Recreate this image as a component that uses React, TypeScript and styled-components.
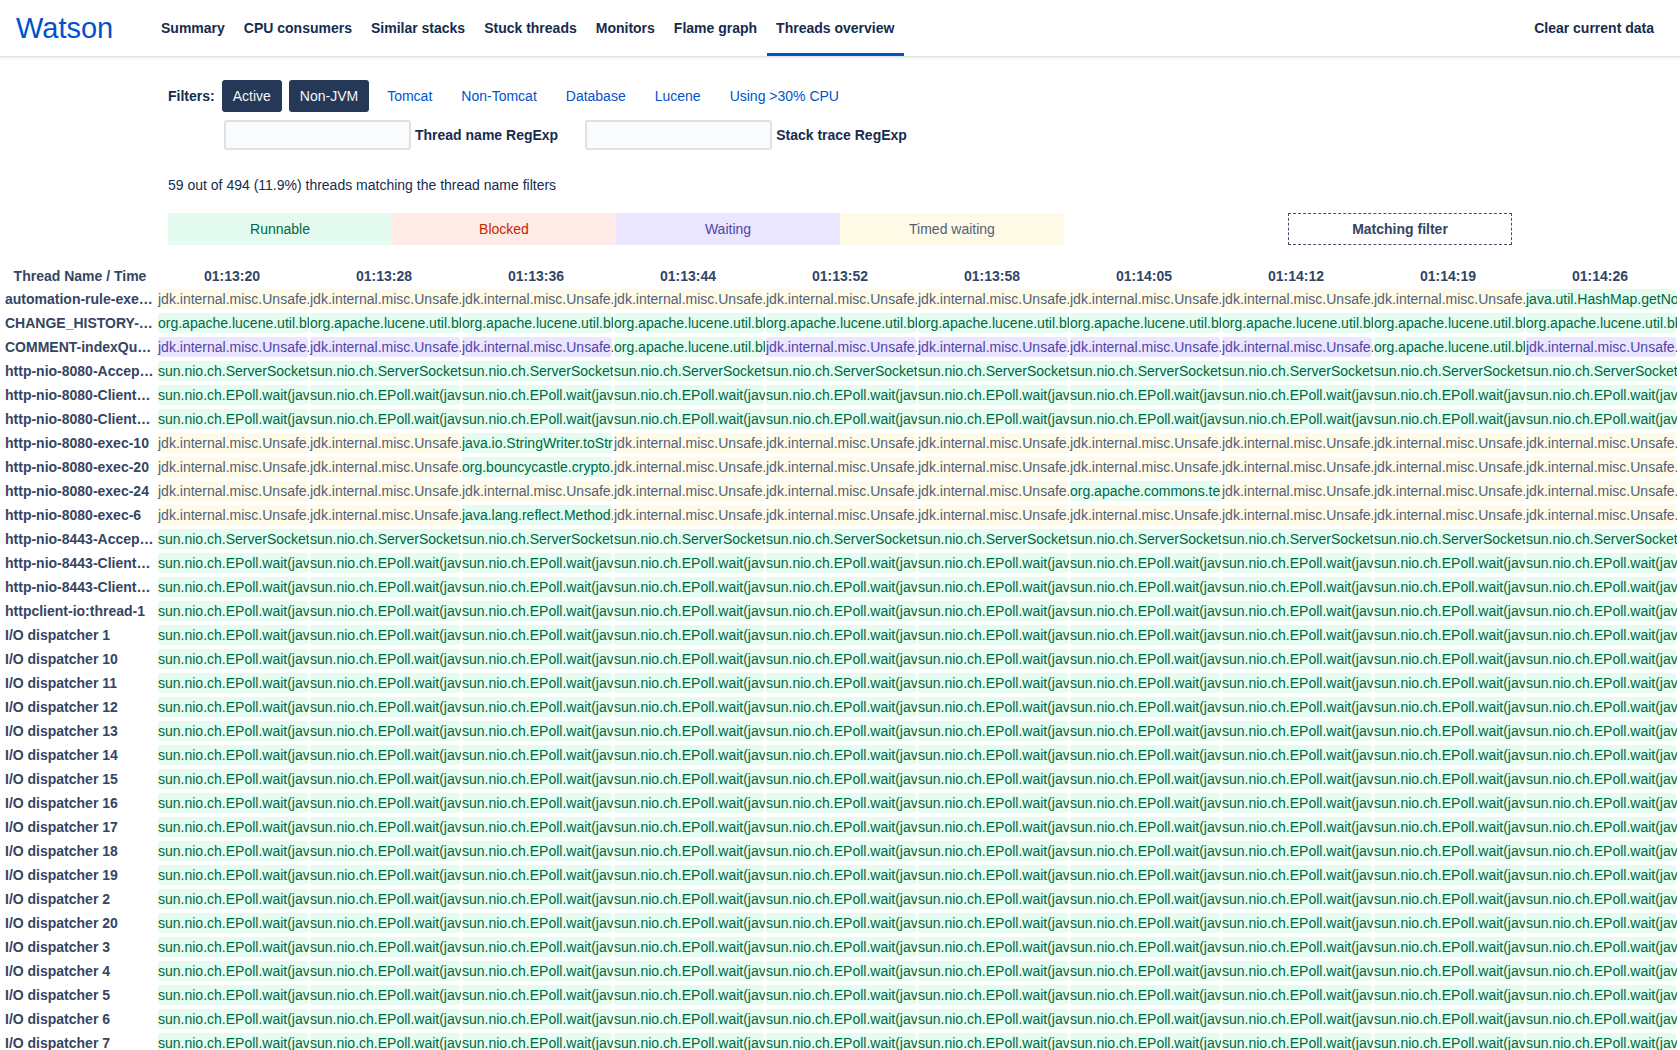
import React from "react";
import styled, { createGlobalStyle, css } from "styled-components";

const GlobalStyle = createGlobalStyle`
  *, *::before, *::after { box-sizing: border-box; }
  html, body { margin: 0; padding: 0; }
  body {
    background: #fff;
    color: #172b4d;
    font-family: "Liberation Sans", Arial, sans-serif;
    font-size: 14px;
    line-height: 20px;
  }
`;

const Page = styled.div`
  height: 100vh;
  overflow: hidden;
`;

const Header = styled.header`
  display: flex;
  align-items: stretch;
  height: 56px;
  padding: 0 16px;
`;

const HeaderShadow = styled.div`
  height: 4px;
  background: linear-gradient(
    180deg,
    rgba(9, 30, 66, 0.13) 0,
    rgba(9, 30, 66, 0.13) 1px,
    rgba(9, 30, 66, 0.08) 1px,
    rgba(9, 30, 66, 0) 4px
  );
`;

const Brand = styled.a`
  display: flex;
  align-items: center;
  width: 136px;
  color: #0052cc;
  font-size: 29px;
  line-height: 32px;
  text-decoration: none;
`;

const Nav = styled.nav`
  display: flex;
  flex: 1;
`;

const navItem = css<{ $current?: boolean }>`
  display: flex;
  align-items: center;
  padding: 3px 10px 0 9px;
  border: 0;
  border-bottom: 3px solid ${(p) => (p.$current ? "#0052cc" : "transparent")};
  background: none;
  color: #172b4d;
  font: inherit;
  font-weight: 700;
  text-decoration: none;
  white-space: nowrap;
  cursor: pointer;
`;

const NavLink = styled.a<{ $current?: boolean }>`
  ${navItem}
`;

const NavButton = styled.button<{ $current?: boolean }>`
  ${navItem}
`;

const Controls = styled.section`
  padding: 20px 10% 0;
`;

const FilterRow = styled.div`
  display: flex;
  align-items: center;
  gap: 7px;
`;

const Strong = styled.span`
  font-weight: 700;
`;

const FilterButton = styled.button<{ $on?: boolean }>`
  height: 32px;
  padding: 0 11px;
  border: 0;
  border-radius: 3px;
  background: ${(p) => (p.$on ? "#253858" : "transparent")};
  color: ${(p) => (p.$on ? "#f4f5f7" : "#0052cc")};
  font: inherit;
  white-space: nowrap;
  cursor: pointer;
`;

const SearchRow = styled.div`
  display: flex;
  gap: 27px;
  padding: 8px 0 0 56px;
`;

const SearchLabel = styled.label`
  display: flex;
  align-items: center;
  gap: 4px;
  font-weight: 700;
`;

const SearchInput = styled.input`
  width: 187px;
  height: 30px;
  padding: 0 8px;
  border: 2px solid #dfe1e6;
  border-radius: 3px;
  background: #fafbfc;
  color: #172b4d;
  font: inherit;
`;

const Summary = styled.p`
  margin: 25px 0 18px;
`;

type State = "runnable" | "blocked" | "waiting" | "timed";

const stateColors: Record<State, { bg: string; fg: string }> = {
  runnable: { bg: "#e3fcef", fg: "#006644" },
  blocked: { bg: "#ffebe6", fg: "#bf2600" },
  waiting: { bg: "#eae6ff", fg: "#5243aa" },
  timed: { bg: "#fffae6", fg: "#505f79" },
};

const Legend = styled.div`
  display: grid;
  grid-template-columns: repeat(6, 1fr);
  line-height: 32px;
  text-align: center;
`;

const LegendItem = styled.div<{ $state: State }>`
  background: ${(p) => stateColors[p.$state].bg};
  color: ${(p) => stateColors[p.$state].fg};
`;

const LegendMatch = styled.div`
  grid-column: 6;
  border: 1px dashed #42526e;
  color: #344563;
  font-weight: 700;
  line-height: 30px;
`;

const TableArea = styled.section`
  padding: 20px 4px 0;
`;

const Table = styled.table`
  width: 100%;
  table-layout: fixed;
  border-collapse: collapse;
`;

const ColumnHead = styled.th`
  height: 22px;
  padding: 0;
  color: #344563;
  text-align: center;
`;

const RowHead = styled.th`
  height: 24px;
  padding: 0 1px;
  overflow: hidden;
  color: #344563;
  text-align: left;
  text-overflow: ellipsis;
  white-space: nowrap;
`;

const Cell = styled.td`
  height: 24px;
  padding: 0 0 0 2px;
`;

const Frame = styled.div<{ $state: State }>`
  height: 20px;
  overflow: clip;
  overflow-clip-margin: 1px;
  border-radius: 3px;
  background: ${(p) => stateColors[p.$state].bg};
  color: ${(p) => stateColors[p.$state].fg};
  white-space: nowrap;
`;

const pages = [
  "Summary",
  "CPU consumers",
  "Similar stacks",
  "Stuck threads",
  "Monitors",
  "Flame graph",
  "Threads overview",
];

const filters = [
  "Active",
  "Non-JVM",
  "Tomcat",
  "Non-Tomcat",
  "Database",
  "Lucene",
  "Using >30% CPU",
];
const activeFilters = ["Active", "Non-JVM"];

const times = [
  "01:13:20",
  "01:13:28",
  "01:13:36",
  "01:13:44",
  "01:13:52",
  "01:13:58",
  "01:14:05",
  "01:14:12",
  "01:14:19",
  "01:14:26",
];

type Sample = { text: string; state: State };

const timedPark: Sample = { text: "jdk.internal.misc.Unsafe.park(java.base)", state: "timed" };
const waitPark: Sample = { text: "jdk.internal.misc.Unsafe.park(java.base)", state: "waiting" };
const bkd: Sample = { text: "org.apache.lucene.util.bkd.BKDWriter", state: "runnable" };
const accept: Sample = { text: "sun.nio.ch.ServerSocketChannelImpl", state: "runnable" };
const epoll: Sample = { text: "sun.nio.ch.EPoll.wait(java.base)", state: "runnable" };
const run = (text: string): Sample => ({ text, state: "runnable" });

type Thread = { name: string; base: Sample; at?: Record<number, Sample> };

const threads: Thread[] = [
  { name: "automation-rule-executor:thread-1", base: timedPark, at: { 9: run("java.util.HashMap.getNode(java.base)") } },
  { name: "CHANGE_HISTORY-indexQueue:thread-1", base: bkd },
  { name: "COMMENT-indexQueue:thread-1", base: waitPark, at: { 3: bkd, 8: bkd } },
  { name: "http-nio-8080-Acceptor", base: accept },
  { name: "http-nio-8080-ClientPoller-0", base: epoll },
  { name: "http-nio-8080-ClientPoller-1", base: epoll },
  { name: "http-nio-8080-exec-10", base: timedPark, at: { 2: run("java.io.StringWriter.toString(java.base)") } },
  { name: "http-nio-8080-exec-20", base: timedPark, at: { 2: run("org.bouncycastle.crypto.digests") } },
  { name: "http-nio-8080-exec-24", base: timedPark, at: { 6: run("org.apache.commons.text.StringEscapeUtils") } },
  { name: "http-nio-8080-exec-6", base: timedPark, at: { 2: run("java.lang.reflect.Method.invoke(java.base)") } },
  { name: "http-nio-8443-Acceptor", base: accept },
  { name: "http-nio-8443-ClientPoller-0", base: epoll },
  { name: "http-nio-8443-ClientPoller-1", base: epoll },
  { name: "httpclient-io:thread-1", base: epoll },
  ...[1, 10, 11, 12, 13, 14, 15, 16, 17, 18, 19, 2, 20, 3, 4, 5, 6, 7].map((n) => ({
    name: `I/O dispatcher ${n}`,
    base: epoll,
  })),
];

export default function App() {
  return (
    <Page>
      <GlobalStyle />
      <Header>
        <Brand href="#">Watson</Brand>
        <Nav>
          {pages.map((page) => (
            <NavLink key={page} href="#" $current={page === "Threads overview"}>
              {page}
            </NavLink>
          ))}
        </Nav>
        <NavButton type="button">Clear current data</NavButton>
      </Header>
      <HeaderShadow />
      <main>
        <Controls>
          <FilterRow>
            <Strong>Filters:</Strong>
            {filters.map((filter) => {
              const on = activeFilters.includes(filter);
              return (
                <FilterButton key={filter} type="button" $on={on} aria-pressed={on}>
                  {filter}
                </FilterButton>
              );
            })}
          </FilterRow>
          <SearchRow>
            <SearchLabel>
              <SearchInput type="text" />
              Thread name RegExp
            </SearchLabel>
            <SearchLabel>
              <SearchInput type="text" />
              Stack trace RegExp
            </SearchLabel>
          </SearchRow>
          <Summary>59 out of 494 (11.9%) threads matching the thread name filters</Summary>
          <Legend>
            <LegendItem $state="runnable">Runnable</LegendItem>
            <LegendItem $state="blocked">Blocked</LegendItem>
            <LegendItem $state="waiting">Waiting</LegendItem>
            <LegendItem $state="timed">Timed waiting</LegendItem>
            <LegendMatch>Matching filter</LegendMatch>
          </Legend>
        </Controls>
        <TableArea>
          <Table>
            <thead>
              <tr>
                <ColumnHead scope="col">Thread Name / Time</ColumnHead>
                {times.map((time) => (
                  <ColumnHead key={time} scope="col">
                    {time}
                  </ColumnHead>
                ))}
              </tr>
            </thead>
            <tbody>
              {threads.map((thread, row) => (
                <tr key={row}>
                  <RowHead scope="row">{thread.name}</RowHead>
                  {times.map((time, i) => {
                    const sample = thread.at?.[i] ?? thread.base;
                    return (
                      <Cell key={time}>
                        <Frame $state={sample.state}>{sample.text}</Frame>
                      </Cell>
                    );
                  })}
                </tr>
              ))}
            </tbody>
          </Table>
        </TableArea>
      </main>
    </Page>
  );
}
